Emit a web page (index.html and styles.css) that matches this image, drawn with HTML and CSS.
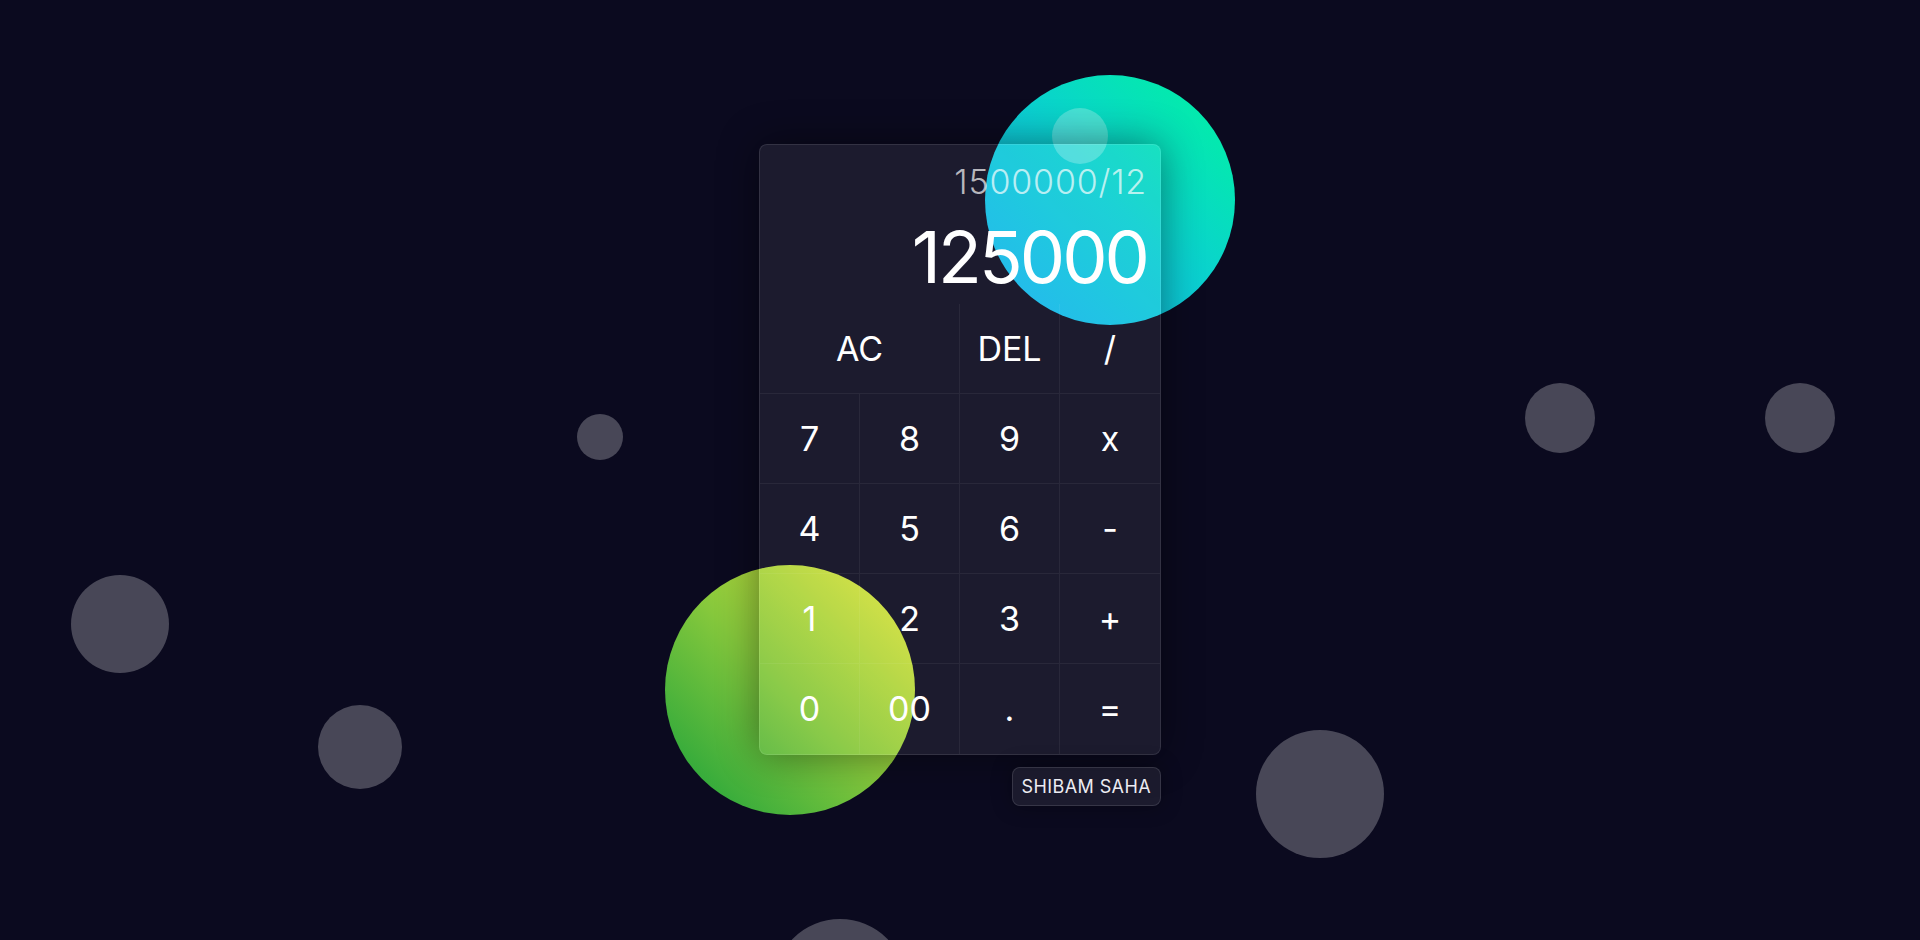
FILE: index.html
```html
<!DOCTYPE html>
<html lang="en">
<head>
<meta charset="utf-8">
<title>Calculator</title>
<link rel="stylesheet" href="styles.css">
</head>
<body>
<div class="bubbles">
  <span class="bubble teal"></span>
  <span class="bubble lime"></span>
  <span class="bubble gray b-small-top"></span>
  <span class="bubble gray b-a"></span>
  <span class="bubble gray b-b"></span>
  <span class="bubble gray b-c"></span>
  <span class="bubble gray b-d"></span>
  <span class="bubble gray b-e"></span>
  <span class="bubble gray b-f"></span>
  <span class="bubble gray b-g"></span>
</div>
<main class="page">
  <div class="wrap">
    <div class="calc">
      <div class="display">
        <div class="prev">1500000/12</div>
        <div class="curr">125000</div>
      </div>
      <div class="keys">
        <button class="key span2">AC</button>
        <button class="key">DEL</button>
        <button class="key end">/</button>
        <button class="key">7</button>
        <button class="key">8</button>
        <button class="key">9</button>
        <button class="key end">x</button>
        <button class="key">4</button>
        <button class="key">5</button>
        <button class="key">6</button>
        <button class="key end">-</button>
        <button class="key">1</button>
        <button class="key">2</button>
        <button class="key">3</button>
        <button class="key end">+</button>
        <button class="key last">0</button>
        <button class="key last">00</button>
        <button class="key last">.</button>
        <button class="key last end">=</button>
      </div>
    </div>
    <div class="badge">SHIBAM SAHA</div>
  </div>
</main>
</body>
</html>
```
FILE: styles.css
```css
* { box-sizing: border-box; }
html, body { margin: 0; padding: 0; overflow: hidden; }
body {
  width: 1920px;
  height: 940px;
  background: #0b0a1f;
  font-family: Inter, "Noto Sans", sans-serif;
  color: #fff;
  position: relative;
}
.bubbles { position: absolute; inset: 0; z-index: 0; overflow: hidden; }
.bubble { position: absolute; border-radius: 50%; display: block; }
.gray { background: rgba(255, 255, 255, 0.25); }
.teal {
  left: 985px; top: 75px; width: 250px; height: 250px;
  background: linear-gradient(to top right, #17b0f2 0%, #0bcfd2 50%, #00f59e 100%);
}
.lime {
  left: 665px; top: 565px; width: 250px; height: 250px;
  background: linear-gradient(to top right, #16a03b 0%, #86c83c 50%, #e6e63a 100%);
}
.b-small-top { left: 1052px; top: 108px; width: 56px; height: 56px; }
.b-a { left: 71px; top: 575px; width: 98px; height: 98px; }
.b-b { left: 318px; top: 705px; width: 84px; height: 84px; }
.b-c { left: 577px; top: 414px; width: 46px; height: 46px; }
.b-d { left: 1525px; top: 383px; width: 70px; height: 70px; }
.b-e { left: 1765px; top: 383px; width: 70px; height: 70px; }
.b-f { left: 1256px; top: 730px; width: 128px; height: 128px; }
.b-g { left: 774px; top: 919px; width: 132px; height: 132px; }

.page {
  position: relative;
  z-index: 1;
  display: flex;
  justify-content: center;
  padding-top: 144px;
}
.wrap { display: flex; flex-direction: column; align-items: flex-end; }
.calc {
  width: 402px;
  border: 1px solid rgba(255, 255, 255, 0.1);
  border-radius: 8px;
  background: rgba(255, 255, 255, 0.07);
  box-shadow: 0 0 40px rgba(0, 0, 0, 0.45);
  overflow: hidden;
}
.display {
  height: 159px;
  padding: 17px 13px 0 14px;
  display: flex;
  flex-direction: column;
  align-items: flex-end;
}
.prev {
  font-size: 34px;
  line-height: 40px;
  font-weight: 300;
  color: rgba(255, 255, 255, 0.7);
  letter-spacing: 0.8px;
}
.curr {
  margin-top: 15px;
  font-size: 72px;
  line-height: 80px;
  font-weight: 400;
  color: #fff;
  letter-spacing: -3px;
}
.keys {
  display: grid;
  grid-template-columns: repeat(4, 100px);
  grid-auto-rows: 90px;
}
.key {
  font-family: inherit;
  font-size: 34px;
  font-weight: 400;
  color: #fff;
  background: transparent;
  border: 0;
  border-right: 1px solid rgba(255, 255, 255, 0.06);
  border-bottom: 1px solid rgba(255, 255, 255, 0.06);
  padding: 0;
  display: flex;
  align-items: center;
  justify-content: center;
  line-height: 40px;
}
.key.span2 { grid-column: span 2; }
.key.end { border-right: 0; }
.key.last { border-bottom: 0; }
.badge {
  margin-top: 12px;
  padding: 8px 9px 7px;
  font-size: 18px;
  line-height: 22px;
  letter-spacing: 0.4px;
  color: #ececf2;
  background: rgba(255, 255, 255, 0.07);
  border: 1px solid rgba(255, 255, 255, 0.12);
  border-radius: 8px;
  box-shadow: 0 0 20px rgba(0, 0, 0, 0.35);
}
```
